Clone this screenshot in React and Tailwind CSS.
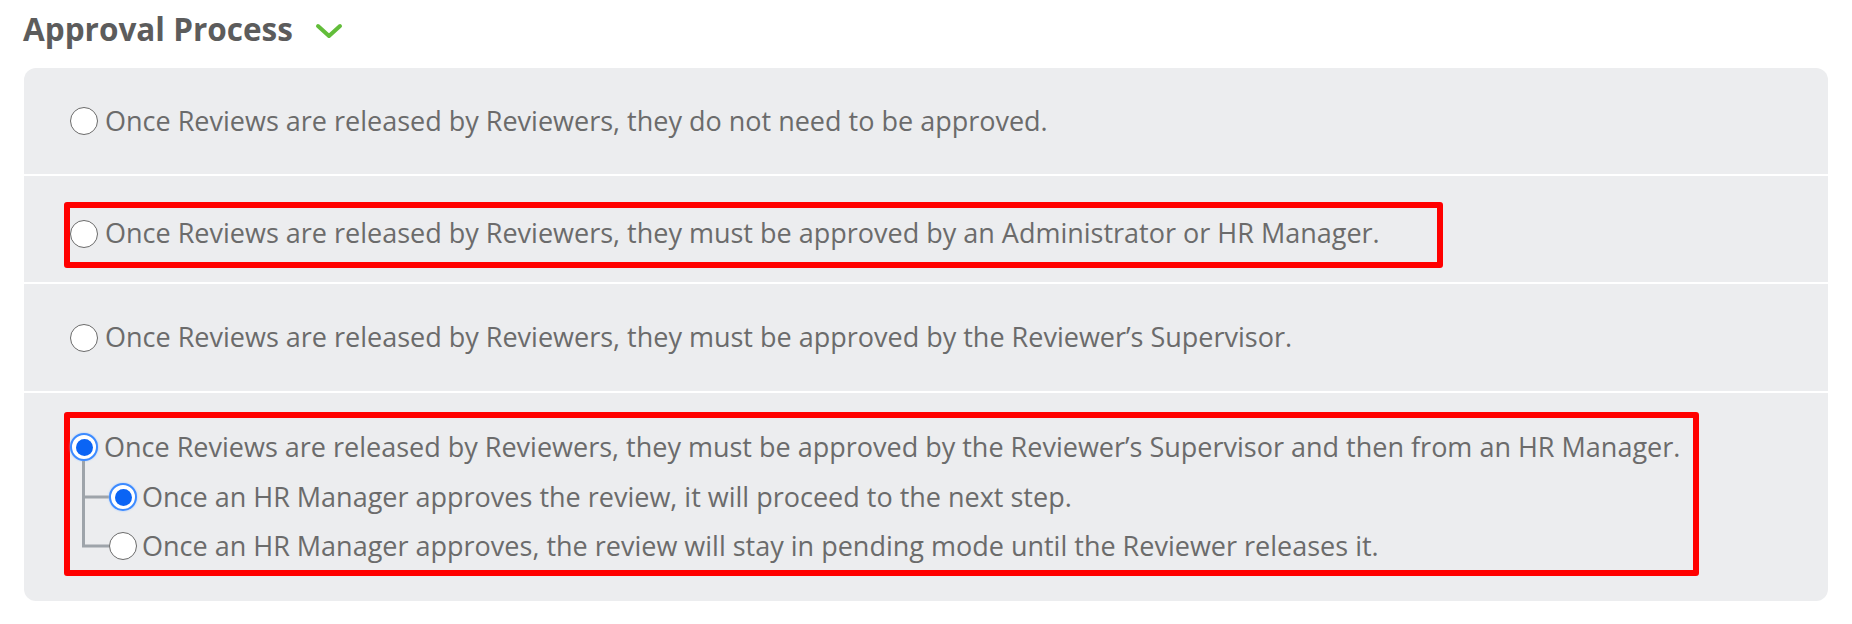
import React from 'react';

const options = [
  'Once Reviews are released by Reviewers, they do not need to be approved.',
  'Once Reviews are released by Reviewers, they must be approved by an Administrator or HR Manager.',
  'Once Reviews are released by Reviewers, they must be approved by the Reviewer\u2019s Supervisor.',
];

function Radio({ checked }) {
  if (checked) {
    return (
      <span className="flex h-[28px] w-[28px] shrink-0 items-center justify-center rounded-full border-2 border-[#3d8bff] bg-white shadow-[0_0_2px_#9cc3ff]">
        <span className="h-[17px] w-[17px] rounded-full bg-[#0a64f5]" />
      </span>
    );
  }
  return <span className="h-[28px] w-[28px] shrink-0 rounded-full border-[1.5px] border-[#6a6a6a] bg-white" />;
}

// tree line drawn from the parent radio down to a child radio
function Connector({ last }) {
  const h = last ? 48 : 50;
  const mid = h / 2;
  return (
    <svg width="27" height={h} className="shrink-0 overflow-visible" viewBox={`0 0 27 ${h}`}>
      <path
        d={last ? `M1.5 -11 V${mid} H27` : `M1.5 -11 V${h} M1.5 ${mid} H27`}
        stroke="#9ea4aa"
        strokeWidth="3"
        fill="none"
      />
    </svg>
  );
}

export default function App() {
  return (
    <div
      className="h-[624px] w-full bg-white pt-[13px] text-[#6b6b6b]"
      style={{ fontFamily: '"Open Sans", "Liberation Sans", sans-serif' }}
    >
      {/* Header */}
      <div className="ml-[23px] flex h-[31px] items-center gap-[22px]">
        <h2 className="text-[31.5px] font-bold leading-[31px] text-[#5c5c5c]">Approval Process</h2>
        <svg width="28" height="16" viewBox="0 0 28 16" className="mt-[4px]">
          <path d="M3 3 L14 13 L25 3" stroke="#62bd3a" strokeWidth="4" fill="none" strokeLinecap="round" strokeLinejoin="round" />
        </svg>
      </div>

      {/* Panel */}
      <div className="ml-[24px] mt-[24px] w-[1804px] overflow-hidden rounded-[12px] bg-[#ecedef] text-[27px]">
        <div className="flex h-[108px] items-center border-b-2 border-white pl-[46px]">
          <Radio />
          <span className="ml-[7px]">{options[0]}</span>
        </div>

        <div className="flex h-[108px] items-start border-b-2 border-white pl-[40px] pt-[26px]">
          <div className="flex h-[66px] w-[1379px] items-center rounded-[3px] border-[6px] border-[#ff0000] pb-[3px]">
            <Radio />
            <span className="ml-[7px]">{options[1]}</span>
          </div>
        </div>

        <div className="flex h-[109px] items-center border-b-2 border-white pl-[46px]">
          <Radio />
          <span className="ml-[7px]">{options[2]}</span>
        </div>

        <div className="h-[208px] pl-[40px] pt-[19px]">
          <div className="flex h-[164px] w-[1635px] flex-col rounded-[3px] border-[6px] border-[#ff0000] pt-[4px]">
            <div className="flex h-[50px] items-center">
              <Radio checked />
              <span className="ml-[6px] whitespace-nowrap">
                Once Reviews are released by Reviewers, they must be approved by the Reviewer’s Supervisor and then from an HR Manager.
              </span>
            </div>
            <div className="flex h-[50px] items-center pl-[12px]">
              <Connector />
              <Radio checked />
              <span className="ml-[5px] whitespace-nowrap">Once an HR Manager approves the review, it will proceed to the next step.</span>
            </div>
            <div className="flex h-[48px] items-center pl-[12px]">
              <Connector last />
              <Radio />
              <span className="ml-[5px] whitespace-nowrap">
                Once an HR Manager approves, the review will stay in pending mode until the Reviewer releases it.
              </span>
            </div>
          </div>
        </div>
      </div>
    </div>
  );
}
